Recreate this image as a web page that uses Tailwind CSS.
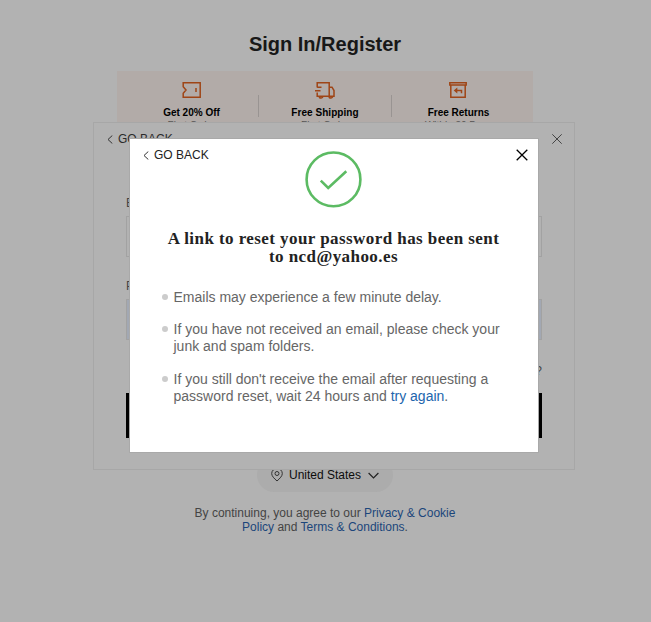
<!DOCTYPE html>
<html lang="en">
<head>
<meta charset="utf-8">
<title>Sign In/Register</title>
<script src="https://cdn.jsdelivr.net/npm/@tailwindcss/browser@4"></script>
</head>
<body class="relative h-[622px] w-[651px] overflow-hidden bg-[#b2b2b2] font-['Liberation_Sans',Arial,sans-serif] text-[#444]">
<main class="flex w-[650px] flex-col items-center">
  <h1 class="mt-[30px] h-[41px] text-[20px] leading-7 font-bold whitespace-nowrap text-[#181818]">Sign In/Register</h1>
  <section class="flex h-[60px] w-[416px] items-start bg-[#b2aba8] pt-[9px] pl-2 text-center">
    <div class="flex w-[133px] flex-col items-center">
      <svg class="h-5 w-5" viewBox="0 0 20 20" fill="none" stroke="#9f4516" stroke-width="1.5"><path d="M1.2 2.8H18.2V17.2H1.2V13.2L4 10L1.2 6.8ZM14 8V12"/></svg>
      <b class="mt-[5px] text-[10px] leading-[15px] whitespace-nowrap text-black">Get 20% Off</b>
      <span class="-mt-px text-[10px] leading-[14px] text-[#555]">First Order</span>
    </div>
    <div class="mt-[15px] h-[22px] w-px bg-[#999492]"></div>
    <div class="flex w-[132px] flex-col items-center">
      <svg class="h-5 w-5" viewBox="0 0 20 20" fill="none" stroke="#9f4516" stroke-width="1.5"><path d="M2.2 7.5V2.8H14.2V16.2M2.2 12.5V16.2H19V10.5L17 7.2H14.2M0 10.8H5.5M2.2 7.3H6.5"/><path d="M4.2 16.2a1.8 1.8 0 0 0 3.6 0M14 16.2a1.8 1.8 0 0 0 3.6 0"/></svg>
      <b class="mt-[5px] text-[10px] leading-[15px] tracking-[0.05px] whitespace-nowrap text-black">Free Shipping</b>
      <span class="-mt-px text-[10px] leading-[14px] text-[#555]">First Order</span>
    </div>
    <div class="mt-[15px] h-[22px] w-px bg-[#999492]"></div>
    <div class="flex w-[133px] flex-col items-center">
      <svg class="mr-px h-5 w-5" viewBox="0 0 20 20" fill="none" stroke="#9f4516" stroke-width="1.5"><path d="M1.8 2.8H18.2V5H1.8ZM2.8 5V17.2H17.2V5"/><path d="M13.5 13.2V10.5H8"/><path d="M9.3 7.5V13.5L5.7 10.5Z" fill="#9f4516" stroke="none"/></svg>
      <b class="mt-[5px] text-[10px] leading-[15px] whitespace-nowrap text-black">Free Returns</b>
      <span class="-mt-px text-[10px] leading-[14px] text-[#555]">Within 30 Days</span>
    </div>
  </section>
  <div class="mt-[327px] flex h-[34px] w-[136px] items-center justify-center rounded-full bg-[#acacac] text-[12px] text-[#0c0c0c]">
    <svg class="mr-[6px] h-[14px] w-3" viewBox="0 0 12 14" fill="none" stroke="#333"><path d="M6 13C3 10.3.7 8 .7 5.6A5.2 5.1 0 0 1 11.3 5.6C11.3 8 9 10.3 6 13Z"/><circle cx="6" cy="5.5" r="2"/></svg>
    <span class="whitespace-nowrap">United States</span>
    <svg class="ml-[7px] h-[7px] w-[11px]" viewBox="0 0 11 7" fill="none" stroke="#222" stroke-width="1.2"><path d="M.6 1L5.5 6L10.4 1"/></svg>
  </div>
  <p class="mt-[14px] w-[280px] text-center text-[12px] leading-[14px]">By continuing, you agree to our <a class="text-[#1b467b]">Privacy &amp; Cookie</a><br><a class="text-[#1b467b]">Policy</a> and <a class="text-[#1b467b]">Terms &amp; Conditions</a>.</p>
</main>

<section class="absolute top-[122px] left-[93px] h-[348px] w-[482px] border border-[#a7a7a7] bg-[#b2b2b2] px-8 text-[12px]">
  <header class="-mx-5 flex h-8 items-center justify-between">
    <div class="flex items-center text-[#2b2b2b]"><svg class="mr-[5px] ml-px h-[9px] w-[6px]" viewBox="0 0 6 9" fill="none" stroke="#333"><path d="M5.3.5L1 4.5L5.3 8.5"/></svg>GO BACK</div>
    <svg class="h-[10px] w-[10px]" viewBox="0 0 10 10" fill="none" stroke="#444"><path d="M.3.3L9.7 9.7M9.7.3L.3 9.7"/></svg>
  </header>
  <label class="mt-[41px] block h-5 leading-[14px]">Email</label>
  <div class="h-[41px] border border-[#a2a2a2] bg-[#b2b2b2]"></div>
  <label class="mt-[22px] block h-5 leading-[14px]">Password</label>
  <div class="h-[41px] border border-[#a2a2a2] bg-[#a2a8b3]"></div>
  <p class="mt-[24px] h-[29px] text-right leading-[14px]">Forgot Password?</p>
  <div class="flex h-[45px] items-center justify-center bg-black text-[#b2b2b2]">SIGN IN</div>
</section>

<section class="absolute top-[139px] left-[130px] h-[313px] w-[408px] bg-white px-[31px] outline outline-[#a9a9a9]">
  <header class="-mx-[19px] flex h-[32px] items-center justify-between text-[12px] text-[#222]">
    <div class="flex items-center"><svg class="mr-[5px] ml-px h-[9px] w-[6px]" viewBox="0 0 6 9" fill="none" stroke="#333"><path d="M5.3.5L1 4.5L5.3 8.5"/></svg>GO BACK</div>
    <svg class="mr-[-2px] h-3 w-3" viewBox="0 0 12 12" fill="none" stroke="#000" stroke-width="1.3"><path d="M.7.7L11.3 11.3M11.3.7L.7 11.3"/></svg>
  </header>
  <svg class="-mt-5 ml-[144px] h-[58px] w-[58px]" viewBox="0.5 0.6 58 58" fill="none" stroke="#5cbb63" stroke-width="2.6"><circle cx="29" cy="29" r="26.9"/><path d="M16.3 30.2L23.7 37.5L41.8 20.8"/></svg>
  <h2 class="mt-[21px] -ml-px text-center font-['Liberation_Serif','Times_New_Roman',serif] text-[17px] leading-[18px] font-bold tracking-[0.43px] whitespace-nowrap text-[#222]">A link to reset your password has been sent<br>to ncd@yahoo.es</h2>
  <ul class="mt-[23px] flex flex-col gap-[15px] text-[14px] leading-[17px] text-[#666]">
    <li class="flex"><i class="mt-[5px] mr-[5.5px] ml-px h-[6px] w-[6px] shrink-0 rounded-full bg-[#ccc]"></i><span class="whitespace-nowrap">Emails may experience a few minute delay.</span></li>
    <li class="flex"><i class="mt-[5px] mr-[5.5px] ml-px h-[6px] w-[6px] shrink-0 rounded-full bg-[#ccc]"></i><span class="whitespace-nowrap">If you have not received an email, please check your<br>junk and spam folders.</span></li>
    <li class="mt-px flex"><i class="mt-[5px] mr-[5.5px] ml-px h-[6px] w-[6px] shrink-0 rounded-full bg-[#ccc]"></i><span class="whitespace-nowrap">If you still don't receive the email after requesting a<br>password reset, wait 24 hours and <a class="text-[#2265ad]">try again</a>.</span></li>
  </ul>
</section>
</body>
</html>
